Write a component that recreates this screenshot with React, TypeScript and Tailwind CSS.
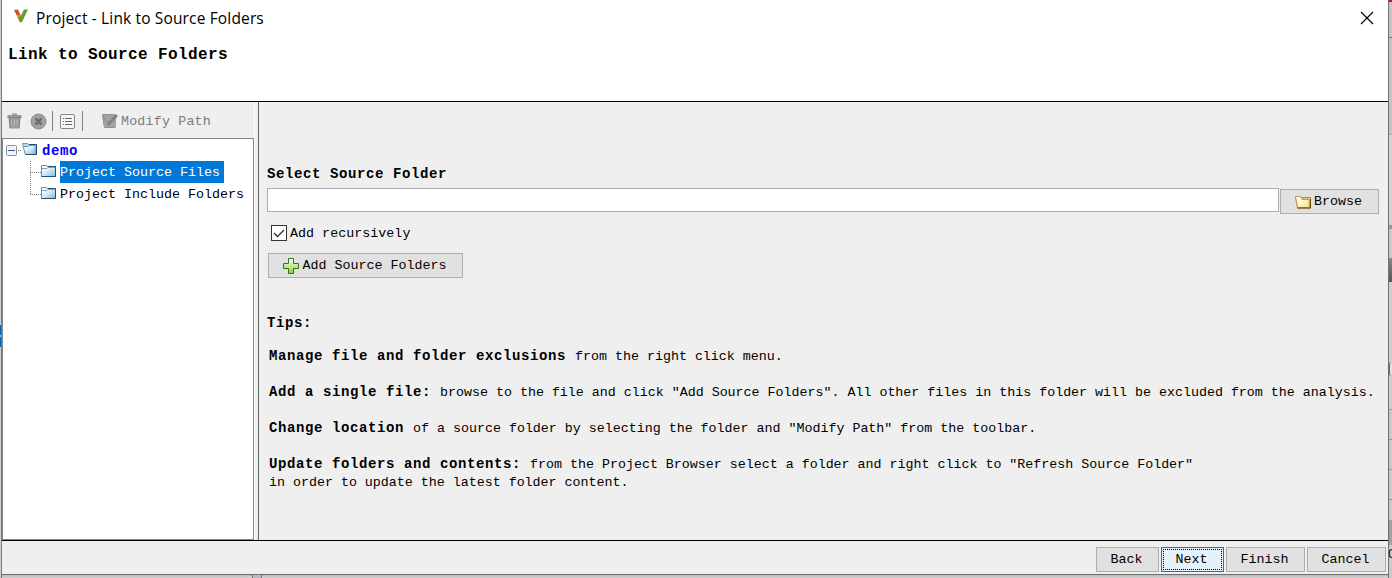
import React from "react";

const mono = "font-['Liberation_Mono','Noto_Sans_CJK_SC',monospace] text-[13.33px] leading-[18px] text-black whitespace-pre";
const strong = "font-bold text-[14px] tracking-[0.6px]";

function Folder({ open = false }: { open?: boolean }) {
  return (
    <svg width="16" height="14" viewBox="0 0 16 14" className="shrink-0">
      <defs>
        <linearGradient id="blueFolder" x1="0" y1="0" x2="1" y2="1">
          <stop offset="0" stopColor="#fff" />
          <stop offset="0.4" stopColor="#e4f2f9" />
          <stop offset="1" stopColor="#7fb9d8" />
        </linearGradient>
      </defs>
      {open ? (
        <>
          <path d="M.5 1.5h5l1 1h8v10H3.500z" fill="#b9d5e6" stroke="#6b9ab6" />
          <path d="M1 4.500h5.500l1-1h5.500l.5 9H3.500z" fill="url(#blueFolder)" stroke="#6a9dbb" />
          <path d="M7 2.500h7.500v10H3.500" fill="none" stroke="#24506b" />
        </>
      ) : (
        <>
          <path d="M.5 12.500V1.500h5l1 1h8v10z" fill="url(#blueFolder)" stroke="#5b91b1" />
          <path d="M1 4.500h5l1-1h7" fill="none" stroke="#7ba8c0" />
          <path d="M6.500 2.500h8v10H.5" fill="none" stroke="#24506b" />
        </>
      )}
    </svg>
  );
}

function Button({ className, children }: { className: string; children: React.ReactNode }) {
  return (
    <button className={`${mono} flex h-[25px] shrink-0 items-center justify-center border border-[#adadad] bg-[#e1e1e1] pr-[2px] ${className}`}>
      {children}
    </button>
  );
}

function Toolbar() {
  return (
    <div className="flex h-9 items-center pl-[5px] pt-[2px]">
      <svg width="15" height="16" viewBox="0 0 15 16">
        <path d="M5 2V.5h5V2h4.500v2.500H.5V2zM1.500 5h12l-1 10.500h-10z" fill="#999" />
        <path d="M4.500 6.500l.5 7M7.500 6.500v7M10.500 6.500l-.5 7" stroke="#bcbcbc" fill="none" />
        <path d="M2.500 5l.7 10M12.500 5l-.7 10M.5 4.500h14" stroke="#858585" fill="none" />
      </svg>
      <svg width="17" height="17" viewBox="0 0 17 17" className="ml-[8px]">
        <circle cx="8.500" cy="8.500" r="7.500" fill="#a1a1a1" stroke="#8b8b8b" />
        <path d="M5.500 5.500l6 6M11.500 5.500l-6 6" stroke="#6e6e6e" strokeWidth="2.500" />
      </svg>
      <div className="ml-[5px] h-5 w-px bg-[#828282]" />
      <svg width="15" height="15" viewBox="0 0 15 15" className="ml-[7px]">
        <rect x=".5" y=".5" width="14" height="14" rx="1.500" fill="#f7f7f7" stroke="#858585" />
        <path d="M3 4.500h1M3 7.500h1M3 10.500h1M5 4.500h7M5 7.500h7M5 10.500h7" stroke="#666" />
      </svg>
      <div className="ml-[7px] h-5 w-px bg-[#828282]" />
      <svg width="17" height="16" viewBox="0 0 17 16" className="ml-[19px]">
        <path d="M0 1h14v13H2z" fill="#a3a3a3" />
        <path d="M.5 1.500H10M.5 2l2 12.500h11" stroke="#919191" fill="none" />
        <path d="M13.500 1l2.500 2-8 9-3 1 .5-3z" fill="#838383" />
        <path d="M1.500 3.500L6 10" stroke="#858585" />
      </svg>
      <span className={`${mono} ml-[2px] mt-[2px] tracking-[0.18px] !text-[#7c7c7c]`}>Modify Path</span>
    </div>
  );
}

function Tree() {
  return (
    <div className="h-[402px] w-[252px] border border-[#828790] bg-white">
      <div className="flex h-[22px] items-center pl-[3px]">
        <svg width="16" height="22" viewBox="0 0 16 22">
          <rect x=".5" y="6.500" width="10" height="10" rx="1" fill="#f5f5f5" stroke="#919191" />
          <path d="M2 11.500h7" stroke="#3453a8" />
          <path d="M12 11.500h4" stroke="#808080" strokeDasharray="1 1" />
        </svg>
        <div className="-mt-[3px]"><Folder open /></div>
        <span className={`${mono} ${strong} ml-1 mt-px !text-[#0000ff]`}>demo</span>
      </div>
      <div className="flex pl-[27px]">
        <svg width="11" height="44" viewBox="0 0 11 44">
          <path d="M.5 0v33M0 11.500h11M0 33.500h11" fill="none" stroke="#808080" strokeDasharray="1 1" />
        </svg>
        <div className="flex flex-col">
          <div className="flex h-[22px] items-center">
            <div className="-mt-[2px]"><Folder /></div>
            <span className={`${mono} ml-[3px] h-[22px] w-[164px] bg-[#0078d7] pt-[3px] !text-white`}>Project Source Files</span>
          </div>
          <div className="flex h-[22px] items-center">
            <div className="-mt-[2px]"><Folder /></div>
            <span className={`${mono} ml-[3px] mt-[2px]`}>Project Include Folders</span>
          </div>
        </div>
      </div>
    </div>
  );
}

function Tip({ title, children }: { title: string; children: React.ReactNode }) {
  return (
    <p className={`${mono} tracking-[-0.01px]`}>
      <span className={`${strong} leading-[14px]`}>{title} </span>
      {children}
    </p>
  );
}

function SourcePanel() {
  return (
    <div className="flex h-full w-[1129px] flex-col bg-[#efefef] pl-2">
      <h2 className={`${mono} ${strong} mt-[63px]`}>Select Source Folder</h2>
      <div className="mt-[5px] flex h-[26px]">
        <input className="h-6 w-[1012px] border border-[#abadb3] bg-white outline-none" />
        <Button className="ml-[1px] mt-px w-[99px]">
          <svg width="16" height="14" viewBox="0 0 16 14" className="mr-[3px]">
            <defs>
              <linearGradient id="yellowFolder" x1="0" y1="0" x2="1" y2="1">
                <stop offset="0" stopColor="#fff" />
                <stop offset="0.4" stopColor="#fffbe0" />
                <stop offset="1" stopColor="#f5df70" />
              </linearGradient>
            </defs>
            <path d="M.5 1.500h5l1 1h9v10.500h-13z" fill="#e3c68d" stroke="#b2832e" />
            <path d="M.5 1.500h5l1.500 3h7l.500 8H2.500z" fill="url(#yellowFolder)" stroke="#c39a4c" />
            <path d="M15.500 4v9h-13" stroke="#5d4a18" fill="none" />
          </svg>
          Browse
        </Button>
      </div>
      <label className={`${mono} ml-1 mt-[10px] flex h-[18px] items-center`}>
        <svg width="16" height="16" viewBox="0 0 16 16" className="mr-[3px]">
          <rect x=".5" y=".5" width="15" height="15" fill="#fff" stroke="#333" />
          <path d="M3 8l3.500 3.500L13 5" fill="none" stroke="#333" strokeWidth="1.300" />
        </svg>
        <span className="mt-[2px] tracking-[0.03px]">Add recursively</span>
      </label>
      <Button className="ml-px mt-[11px] w-[195px]">
        <svg width="16" height="16" viewBox="0 0 16 16" className="mr-[4px]">
          <defs>
            <linearGradient id="green" x1="0" y1="0" x2="0" y2="1">
              <stop offset="0" stopColor="#fff" />
              <stop offset="1" stopColor="#8bd326" />
            </linearGradient>
          </defs>
          <path d="M5.500.5h5v5h5v5h-5v5h-5v-5h-5v-5h5z" fill="url(#green)" stroke="#2f7420" />
        </svg>
        Add Source Folders
      </Button>
      <h2 className={`${mono} ${strong} mt-[36px]`}>Tips:</h2>
      <div className="ml-[2px] mt-[16px] flex flex-col gap-[18px]">
        <Tip title="Manage file and folder exclusions">from the right click menu.</Tip>
        <Tip title="Add a single file:">browse to the file and click "Add Source Folders". All other files in this folder will be excluded from the analysis.</Tip>
        <Tip title="Change location">of a source folder by selecting the folder and "Modify Path" from the toolbar.</Tip>
        <Tip title="Update folders and contents:">
          from the Project Browser select a folder and right click to "Refresh Source Folder"<br />in order to update the latest folder content.
        </Tip>
      </div>
    </div>
  );
}

function RightEdge() {
  return (
    <div className="flex w-1 flex-col border-l border-[#707070] bg-[#cacaca]">
      <div className="h-[2px] bg-[#e80010]" />
      <div className="h-[35px] bg-[#c4c4c4]" />
      <div className="h-px bg-[#777]" />
      <div className="h-[96px] bg-[#c4c4c4]" />
      <div className="h-px bg-[#aaa]" />
      <div className="h-[90px] bg-[#d3d3d3]" />
      <div className="h-[4px] bg-[#999]" />
      <div className="h-[29px] bg-[#cacaca]" />
      <div className="h-[24px] bg-gradient-to-b from-[#888] to-[#555]" />
      <div className="h-[80px] bg-[#d0d0d0]" />
      <div className="h-[14px] rounded-l-full border-l border-[#48708c] bg-[#dce5ea]" />
      <div className="h-[33px] bg-[#d0d0d0]" />
      <div className="h-px bg-[#999]" /><div className="h-[29px]" />
      <div className="h-px bg-[#999]" /><div className="h-[29px]" />
      <div className="h-px bg-[#999]" /><div className="h-[29px]" />
      <div className="h-px bg-[#999]" /><div className="h-[20px]" />
      <div className="h-[25px] bg-[#a1a1a1]" />
      <div className="h-[4px]" />
      <div className="h-[9px] w-[3px] rounded-l-full border border-r-0 border-[#222]" />
    </div>
  );
}

export default function App() {
  return (
    <div className="flex h-[578px] w-[1392px] overflow-hidden bg-[#cecece]">
      <div className="flex w-[2px] flex-col border-r border-[#747a82] bg-[#cfcfcf]">
        <div className="mt-[325px] h-[22px] bg-[#0060b9] py-[10px]"><div className="h-[2px] bg-[#b2d1ed]" /></div>
      </div>
      <div className="flex w-[1386px] flex-col">
        <header className="flex h-[102px] flex-col border-b border-black bg-white">
          <div className="flex h-9 items-center">
            <svg width="16" height="15" viewBox="0 0 16 15" className="ml-[11px] -mt-[3px]">
              <path d="M1 1l4-.5 3 7-1 5.500z" fill="#c9502a" />
              <path d="M3 5l5 2 .5 6-2-.5z" fill="#e3a02b" />
              <path d="M5 8l2.500-.5L11 .5h4L9 13l-2 .500z" fill="#679b34" />
            </svg>
            <span className="ml-[7px] font-['Open_Sans','Noto_Sans',sans-serif] text-[15.5px] leading-5 tracking-[0.15px] text-black whitespace-pre">Project - Link to Source Folders</span>
            <svg width="14" height="14" viewBox="0 0 14 14" className="ml-auto mr-[14px]">
              <path d="M1 1l12 12M13 1L1 13" stroke="#000" strokeWidth="1.100" />
            </svg>
          </div>
          <h1 className={`${mono} ml-[6px] mt-[10px] font-bold !text-[16px] tracking-[0.4px]`}>Link to Source Folders</h1>
        </header>
        <main className="flex h-[438px]">
          <aside className="w-[252px] bg-[#efefef]"><Toolbar /><Tree /></aside>
          <div className="w-[5px] border-r border-[#636363] bg-[#efefef]"><div className="h-full w-px bg-white" /></div>
          <SourcePanel />
        </main>
        <footer className="flex h-[35px] justify-end gap-[2px] border-y border-b-[#707070] border-t-black bg-[#efefef] pr-[2px] pt-[6px]">
          <Button className="w-[63px]">Back</Button>
          <Button className="w-[63px] !border-[#0078d7] !bg-[#e5f1fb] outline-1 -outline-offset-3 outline-dotted outline-black">Next</Button>
          <Button className="w-[79px]">Finish</Button>
          <Button className="w-[79px]">Cancel</Button>
        </footer>
        <div className="flex h-[3px] bg-gradient-to-b from-[#b8b8b8] to-[#d5d5d5]">
          <div className="ml-[250px] h-full w-[10px] border-x border-[#74747b] bg-[#babac2]" />
        </div>
      </div>
      <RightEdge />
    </div>
  );
}
